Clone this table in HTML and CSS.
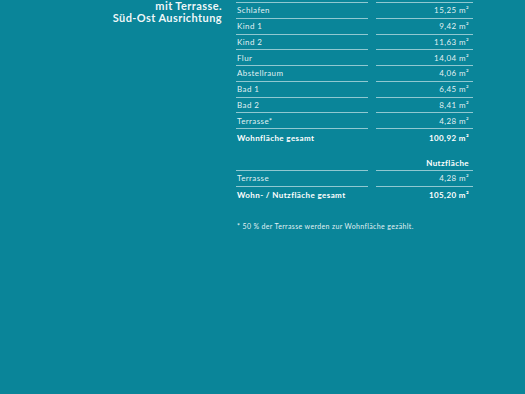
FILE: index.html
```html
<!DOCTYPE html>
<html lang="de">
<head>
<meta charset="utf-8">
<title>Wohnflächen</title>
<link rel="stylesheet" href="styles.css">
</head>
<body>
<main class="sheet">
  <div class="intro">
    <p>mit Terrasse.</p>
    <p>Süd-Ost Ausrichtung</p>
  </div>
  <section class="areas">
    <div class="row"><span class="cell">Schlafen</span><span class="cell val">15,25 m²</span></div>
    <div class="row"><span class="cell">Kind 1</span><span class="cell val">9,42 m²</span></div>
    <div class="row"><span class="cell">Kind 2</span><span class="cell val">11,63 m²</span></div>
    <div class="row"><span class="cell">Flur</span><span class="cell val">14,04 m²</span></div>
    <div class="row"><span class="cell">Abstellraum</span><span class="cell val">4,06 m²</span></div>
    <div class="row"><span class="cell">Bad 1</span><span class="cell val">6,45 m²</span></div>
    <div class="row"><span class="cell">Bad 2</span><span class="cell val">8,41 m²</span></div>
    <div class="row"><span class="cell">Terrasse*</span><span class="cell val">4,28 m²</span></div>
    <div class="row total"><span class="cell">Wohnfläche gesamt</span><span class="cell val">100,92 m²</span></div>

    <div class="row head"><span class="cell"></span><span class="cell val">Nutzfläche</span></div>
    <div class="row"><span class="cell">Terrasse</span><span class="cell val">4,28 m²</span></div>
    <div class="row total"><span class="cell">Wohn- / Nutzfläche gesamt</span><span class="cell val">105,20 m²</span></div>

    <p class="note">* 50 % der Terrasse werden zur Wohnfläche gezählt.</p>
  </section>
</main>
</body>
</html>
```

FILE: styles.css
```css
html, body {
  margin: 0;
  padding: 0;
}
body {
  background: #0a8599;
  width: 525px;
  height: 394px;
  overflow: hidden;
  font-family: Lato, "Liberation Sans", sans-serif;
  color: #ffffff;
}
.sheet {
  display: flex;
  align-items: flex-start;
}
.intro {
  width: 222px;
  margin-top: 0;
  text-align: right;
  font-weight: 700;
  font-size: 11px;
  line-height: 11.7px;
  letter-spacing: 0.4px;
  color: rgba(255, 255, 255, 0.95);
}
.intro p {
  margin: 0;
}
.areas {
  margin-left: 14px;
  padding-top: 2px;
  width: 237px;
}
.row {
  display: grid;
  grid-template-columns: 132px 97px;
  column-gap: 8px;
  height: 15.75px;
  font-size: 8px;
  letter-spacing: 0.4px;
  color: rgba(255, 255, 255, 0.9);
}
.cell {
  display: flex;
  align-items: center;
  border-top: 1px solid rgba(255, 255, 255, 0.55);
  padding-left: 1px;
  white-space: nowrap;
}
.val {
  justify-content: flex-end;
  padding-right: 4px;
}
.total {
  height: 18px;
  font-weight: 700;
  color: #ffffff;
}
.head {
  height: 15px;
  margin-top: 9px;
  font-weight: 700;
  color: #ffffff;
}
.head .cell {
  border-top: none;
}
.note {
  margin: 18px 0 0 1px;
  font-size: 7px;
  line-height: 8px;
  letter-spacing: 0.35px;
  color: rgba(255, 255, 255, 0.9);
}
```
